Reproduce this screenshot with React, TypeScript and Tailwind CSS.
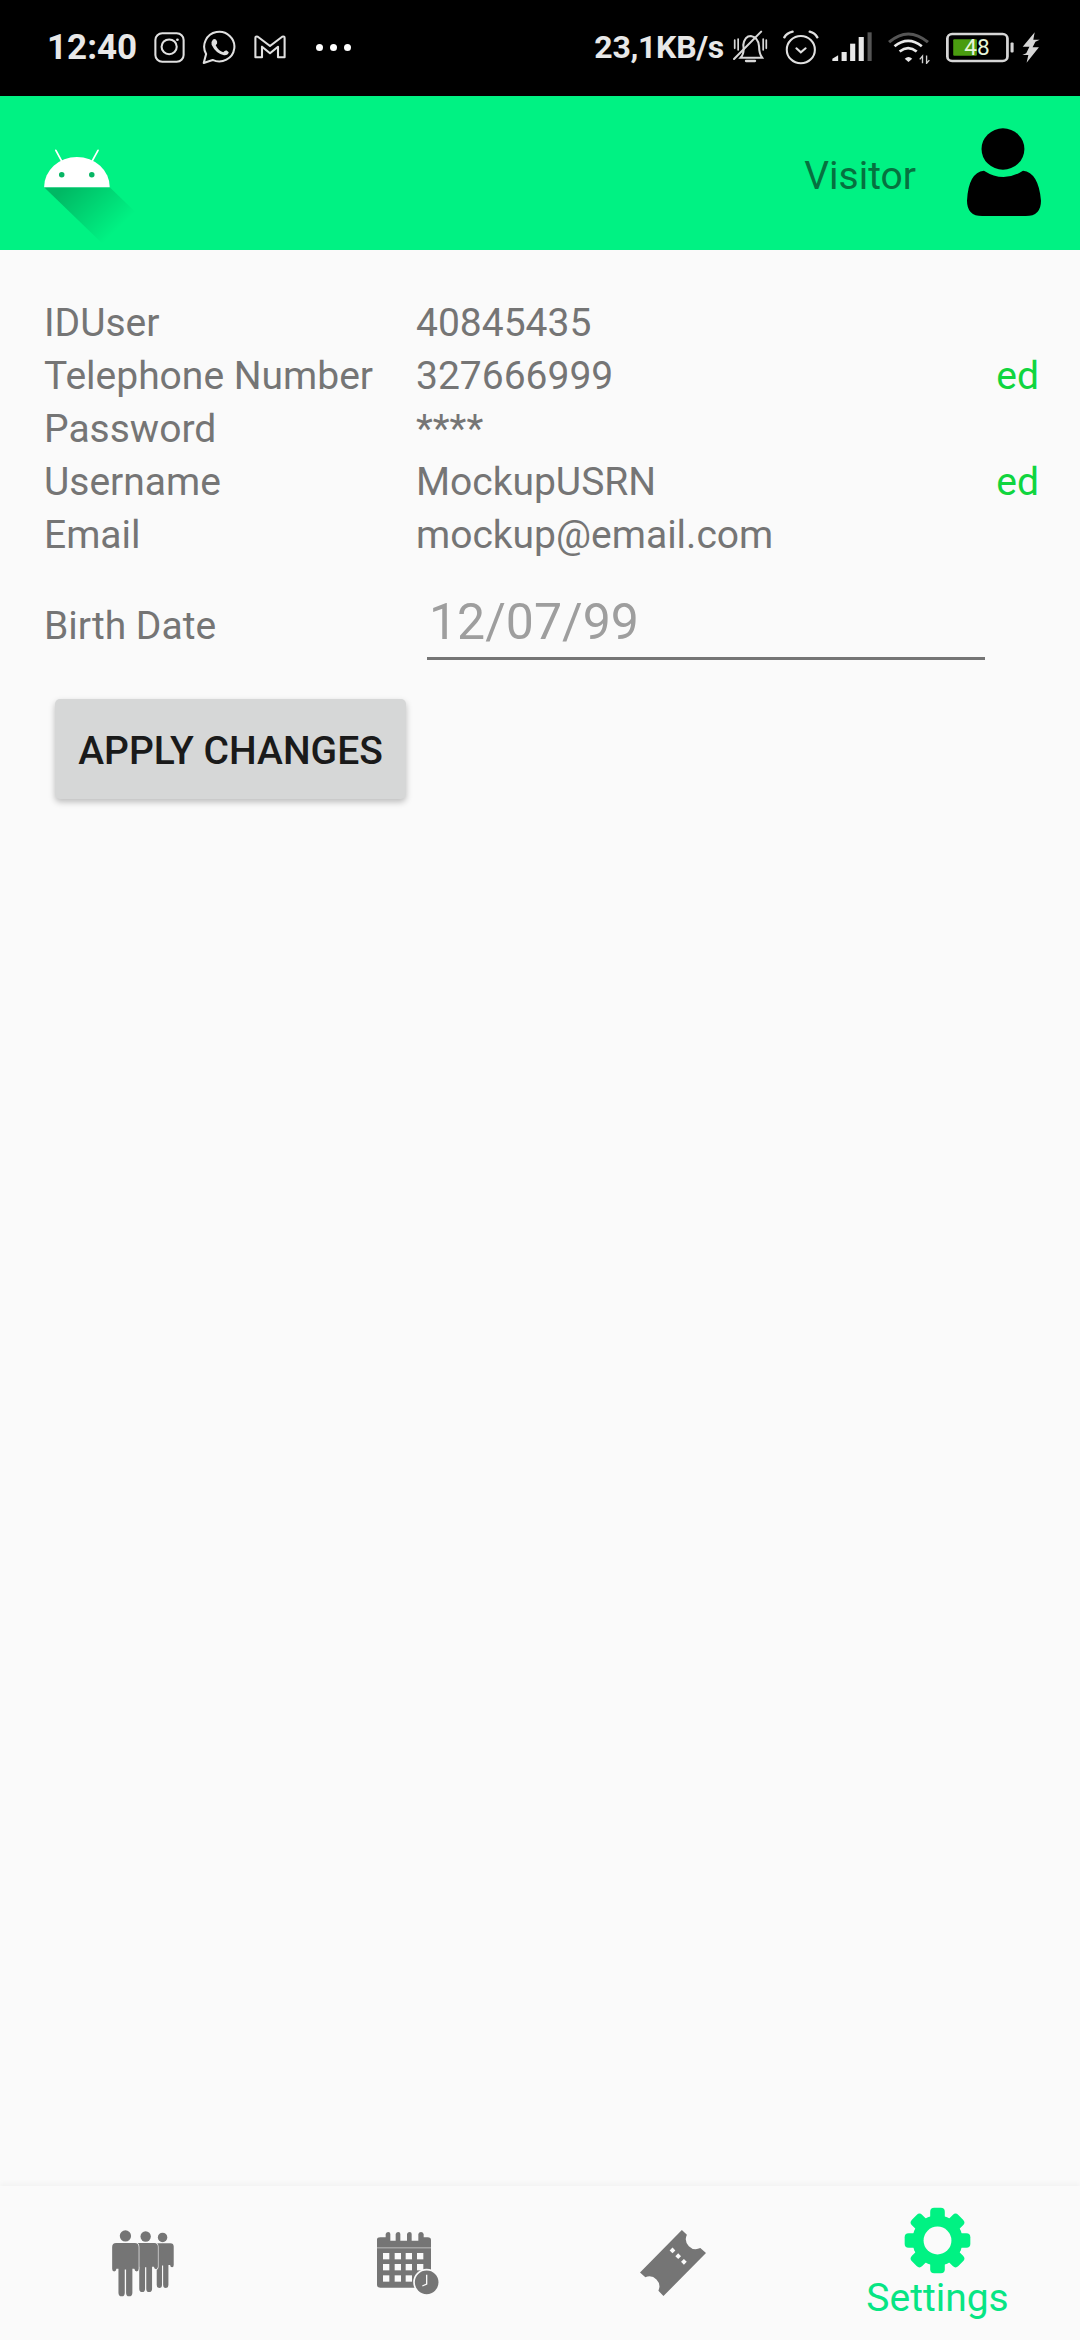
const rows = [
  { label: 'IDUser', value: '40845435', edited: false },
  { label: 'Telephone Number', value: '327666999', edited: true },
  { label: 'Password', value: '****', edited: false },
  { label: 'Username', value: 'MockupUSRN', edited: true },
  { label: 'Email', value: 'mockup@email.com', edited: false },
];

function StatusLeft() {
  return (
    <div className="flex items-center">
      <span className="text-[35px] font-bold leading-none w-[107px] text-[#e8e8e8]">12:40</span>
      {/* instagram */}
      <svg width="31" height="31" viewBox="449 89 90 92" preserveAspectRatio="none" fill="none" stroke="#e0e0e0" strokeWidth="6">
        <rect x="453" y="93" width="82" height="84" rx="20" />
        <circle cx="493" cy="133" r="22" />
        <circle cx="517" cy="112" r="4" fill="#e0e0e0" stroke="none" />
      </svg>
      {/* whatsapp */}
      <svg className="ml-[17px]" width="35" height="35" viewBox="588 84 102 104" preserveAspectRatio="none" fill="none" stroke="#e0e0e0" strokeWidth="6">
        <path d="M593 182 L600 155 A44 44 0 1 1 619 173 Z" strokeLinejoin="round" />
        <path d="M620 112 Q628 108 632 118 Q634 124 628 129 Q636 146 650 150 Q655 143 660 145 L666 150 Q664 160 652 159 Q628 154 616 128 Q614 118 620 112 Z" fill="#e0e0e0" stroke="none" />
      </svg>
      {/* m */}
      <svg className="ml-[17px]" width="32" height="24" viewBox="739 97 92 72" preserveAspectRatio="none" fill="none" stroke="#e0e0e0" strokeWidth="6" strokeLinejoin="round">
        <path d="M743 164 V106 Q743 100 750 102 L785 130 L820 102 Q827 100 827 106 V164 H808 V132 L785 152 L762 132 V164 Z" />
      </svg>
      <div className="ml-[30px] flex gap-[7px]">
        <span className="w-[7px] h-[7px] rounded-full bg-white" />
        <span className="w-[7px] h-[7px] rounded-full bg-white" />
        <span className="w-[7px] h-[7px] rounded-full bg-white" />
      </div>
    </div>
  );
}

function StatusRight() {
  return (
    <div className="flex items-center">
      <span className="text-[32px] font-bold leading-none tracking-[-0.3px] text-[#e8e8e8]">23,1KB/s</span>
      {/* muted bell */}
      <svg className="ml-[9px]" width="35" height="34" viewBox="560 85 102 102" preserveAspectRatio="none" fill="none" stroke="#d8d8d8" strokeWidth="6" strokeLinecap="round">
        <path d="M582 168 Q594 155 590 130 Q594 103 612 103 Q634 106 636 135 Q636 155 645 168 Z" />
        <path d="M598 178 H624" strokeWidth="7" />
        <path d="M563 172 L642 90" />
        <path d="M565 115 V140 M575 112 V145 M648 112 V145 M657 115 V140" strokeWidth="5" />
      </svg>
      {/* alarm */}
      <svg className="ml-[15px]" width="36" height="35" viewBox="705 83 105 105" preserveAspectRatio="none" fill="none" stroke="#e0e0e0" strokeWidth="6" strokeLinecap="round">
        <circle cx="757" cy="142" r="41" />
        <path d="M744 138 L757 150 L771 138" />
        <path d="M709 105 Q716 92 733 88 M783 88 Q798 92 805 105" strokeWidth="7" />
      </svg>
      {/* signal */}
      <svg className="ml-[13px]" width="40" height="30" viewBox="848 90 117 90" preserveAspectRatio="none">
        <path d="M849 177 V170 L866 160 V177 Z" fill="#e8e8e8" />
        <rect x="876" y="150" width="15" height="27" fill="#e8e8e8" />
        <rect x="901" y="125" width="15" height="52" fill="#e8e8e8" />
        <rect x="926" y="105" width="15" height="72" fill="#e8e8e8" />
        <rect x="952" y="91" width="12" height="86" fill="#555" />
      </svg>
      {/* wifi */}
      <svg className="ml-[15px]" width="43" height="33" viewBox="1008 88 126 100" preserveAspectRatio="none" fill="none" strokeLinecap="butt">
        <path d="M1014 122 Q1070 72 1128 122" stroke="#555" strokeWidth="9" />
        <path d="M1030 134 Q1070 102 1110 134" stroke="#e8e8e8" strokeWidth="8" />
        <path d="M1045 150 Q1070 130 1095 150" stroke="#e8e8e8" strokeWidth="8" />
        <path d="M1060 172 L1071 182 L1082 172 Q1071 162 1060 172 Z" fill="#e8e8e8" />
        <path d="M1112 186 V164 L1104 174 M1124 162 V186 L1132 176" stroke="#d0d0d0" strokeWidth="4" />
      </svg>
      {/* battery */}
      <svg className="ml-[16px]" width="69" height="31" viewBox="1178 88 201 94" preserveAspectRatio="none">
        <rect x="1182" y="94" width="175" height="82" rx="14" fill="none" stroke="#d6d6d6" strokeWidth="8" />
        <rect x="1199" y="110" width="69" height="50" rx="3" fill="#4a9c10" />
        <rect x="1366" y="120" width="9" height="30" rx="3" fill="#d6d6d6" />
        <text x="1231" y="159" fontSize="66" fontFamily="Roboto, sans-serif" fill="#e6f5d8">48</text>
      </svg>
      {/* bolt */}
      <svg className="ml-[7px]" width="18" height="31" viewBox="1400 89 51 92" preserveAspectRatio="none" fill="#d6d6d6">
        <path d="M1436 90 L1402 133 H1421 L1412 152 L1401 157 H1418 L1413 180 L1448 134 H1430 L1438 118 L1450 112 H1432 Z" />
      </svg>
    </div>
  );
}

function Android() {
  return (
    <svg className="self-end ml-[41px]" width="114" height="102" viewBox="120 445 330 305" preserveAspectRatio="none">
      <defs>
        <linearGradient id="longShadow" gradientUnits="userSpaceOnUse" x1="205" y1="545" x2="345" y2="685">
          <stop offset="0" stopColor="#000" stopOpacity="0.24" />
          <stop offset="1" stopColor="#000" stopOpacity="0" />
        </linearGradient>
      </defs>
      <path d="M129 562 H319 L430 673 L353 750 H317 Z" fill="url(#longShadow)" />
      <path d="M129 562 A95 90 0 0 1 319 562 Z" fill="#fff" />
      <path d="M180 484 L163 452 M268 484 L285 452" stroke="#fff" strokeWidth="5" strokeLinecap="round" />
      <circle cx="180" cy="525" r="8" fill="#07B564" />
      <circle cx="267" cy="525" r="8" fill="#07B564" />
    </svg>
  );
}

function UserIcon() {
  return (
    <svg width="74" height="88" viewBox="1238 387 214 264" preserveAspectRatio="none" fill="#000">
      <circle cx="1342" cy="450" r="62" />
      <path d="M1287 515 Q1344 553 1400 515 Q1445 520 1452 605 Q1452 651 1408 651 H1282 Q1238 651 1238 605 Q1242 520 1287 515 Z" />
    </svg>
  );
}

function Person({ x, y, s }: { x: number; y: number; s: number }) {
  return (
    <g transform={`translate(${x} ${y}) scale(${s})`} stroke="#fafafa" strokeWidth="4" paintOrder="stroke">
      <circle cx="0" cy="17" r="17" stroke="none" />
      <path d="M-28 38 H28 Q40 38 40 50 V116 Q40 124 34 124 Q28 124 27 116 H21 V188 Q21 199 11 199 Q2 199 2 188 V118 H-2 V188 Q-2 199 -11 199 Q-21 199 -21 188 V116 H-27 Q-28 124 -34 124 Q-40 124 -40 116 V50 Q-40 38 -28 38 Z" />
    </g>
  );
}

function PeopleIcon() {
  return (
    <svg width="64" height="67" viewBox="150 178 192 202" fill="#757575">
      <Person x={305} y={186} s={0.84} />
      <Person x={254} y={182} s={0.92} />
      <Person x={193} y={179} s={1} />
    </svg>
  );
}

function CalendarIcon() {
  const xs = [966, 1001, 1034, 1068];
  const ys = [249, 282, 316];
  return (
    <svg width="64" height="64" viewBox="945 183 192 192" fill="#757575">
      <path d="M948 208 Q948 202 958 202 H974 V192 Q976 186 982 186 Q988 186 988 192 V212 H1004 V192 Q1006 186 1012 186 Q1018 186 1018 192 V212 H1038 V192 Q1040 186 1046 186 Q1052 186 1052 192 V212 H1072 V192 Q1074 186 1080 186 Q1086 186 1088 192 V202 H1100 Q1110 202 1110 210 V344 Q1110 353 1100 353 H958 Q948 353 948 344 Z" />
      <rect x="948" y="232" width="162" height="3" fill="#bdbdbd" />
      {ys.map(y => xs.map(x => <rect key={`${x}-${y}`} x={x} y={y} width="19" height="19" fill="#fafafa" />))}
      <circle cx="1097" cy="337" r="38" stroke="#fafafa" strokeWidth="5" />
      <path d="M1097 314 V342 L1084 348" fill="none" stroke="#fafafa" strokeWidth="4" />
    </svg>
  );
}

function TicketIcon() {
  return (
    <svg width="68" height="68" viewBox="115 178 203 203" fill="#757575">
      <path d="M243 181 L258 195 A30 30 0 0 0 298 235 L315 250 L188 378 L173 362 A30 30 0 0 0 134 322 L118 308 Z" />
      <rect x="209" y="236" width="12" height="12" transform="rotate(45 215 242)" fill="#fafafa" />
      <rect x="226" y="253" width="12" height="12" transform="rotate(45 232 259)" fill="#fafafa" />
      <rect x="243" y="270" width="12" height="12" transform="rotate(45 249 276)" fill="#fafafa" />
    </svg>
  );
}

function GearIcon() {
  const angles = [0, 45, 90, 135, 180, 225, 270, 315];
  return (
    <svg width="67" height="67" viewBox="910 112 202 202" fill="#00F283">
      <circle cx="1011" cy="213" r="76" />
      {angles.map(a => (
        <rect key={a} x="989" y="114" width="44" height="50" rx="12" transform={`rotate(${a} 1011 213)`} />
      ))}
      <circle cx="1011" cy="213" r="42" fill="#fafafa" />
    </svg>
  );
}

export default function App() {
  return (
    <div className="h-[2340px] w-[1080px] flex flex-col bg-[#fafafa] font-['Roboto',sans-serif] overflow-hidden">
      <div className="h-[96px] bg-black flex items-center justify-between pl-[47px] pr-[40px] pb-[2px] shrink-0">
        <StatusLeft />
        <StatusRight />
      </div>

      <header className="h-[154px] bg-[#00F283] flex items-center justify-between pr-[39px] shrink-0">
        <Android />
        <div className="flex items-center">
          <span className="text-[39px] mt-[7px] text-[#06713F]">Visitor</span>
          <div className="ml-[51px] mt-[-2px]">
            <UserIcon />
          </div>
        </div>
      </header>

      <main className="flex-1 pt-[47px] pl-[44px] text-[#757575] text-[39px]">
        {rows.map(row => (
          <div key={row.label} className="flex h-[53px] items-center pr-[41px] leading-none">
            <span className="w-[372px]">{row.label}</span>
            <span className="flex-1">{row.value}</span>
            {row.edited && <span className="text-[#10D53E]">ed</span>}
          </div>
        ))}

        <div className="flex mt-[16px]">
          <span className="w-[383px] pt-[22px] leading-[53px]">Birth Date</span>
          <div className="w-[558px] h-[82px] border-b-[3px] border-[#757575] pl-[2px] pt-[10px] text-[50px] leading-[68px] text-[#9e9e9e]">
            12/07/99
          </div>
        </div>

        <button className="block mt-[39px] ml-[11px] w-[351px] h-[100px] pt-[4px] bg-[#D6D7D7] rounded-[5px] text-[39px] font-medium text-[#1a1a1a] shadow-[0_3px_6px_rgba(0,0,0,0.25)]">
          APPLY CHANGES
        </button>
      </main>

      <nav className="h-[154px] shrink-0 grid grid-cols-4 px-[10px] bg-[#fafafa] shadow-[0_-3px_5px_rgba(0,0,0,0.03)]">
        <div className="flex items-center justify-center"><PeopleIcon /></div>
        <div className="flex items-center justify-center"><CalendarIcon /></div>
        <div className="flex items-center justify-center"><TicketIcon /></div>
        <div className="flex flex-col items-center pt-[21px]">
          <GearIcon />
          <span className="text-[39px] leading-[48px] text-[#07E584]">Settings</span>
        </div>
      </nav>
    </div>
  );
}
